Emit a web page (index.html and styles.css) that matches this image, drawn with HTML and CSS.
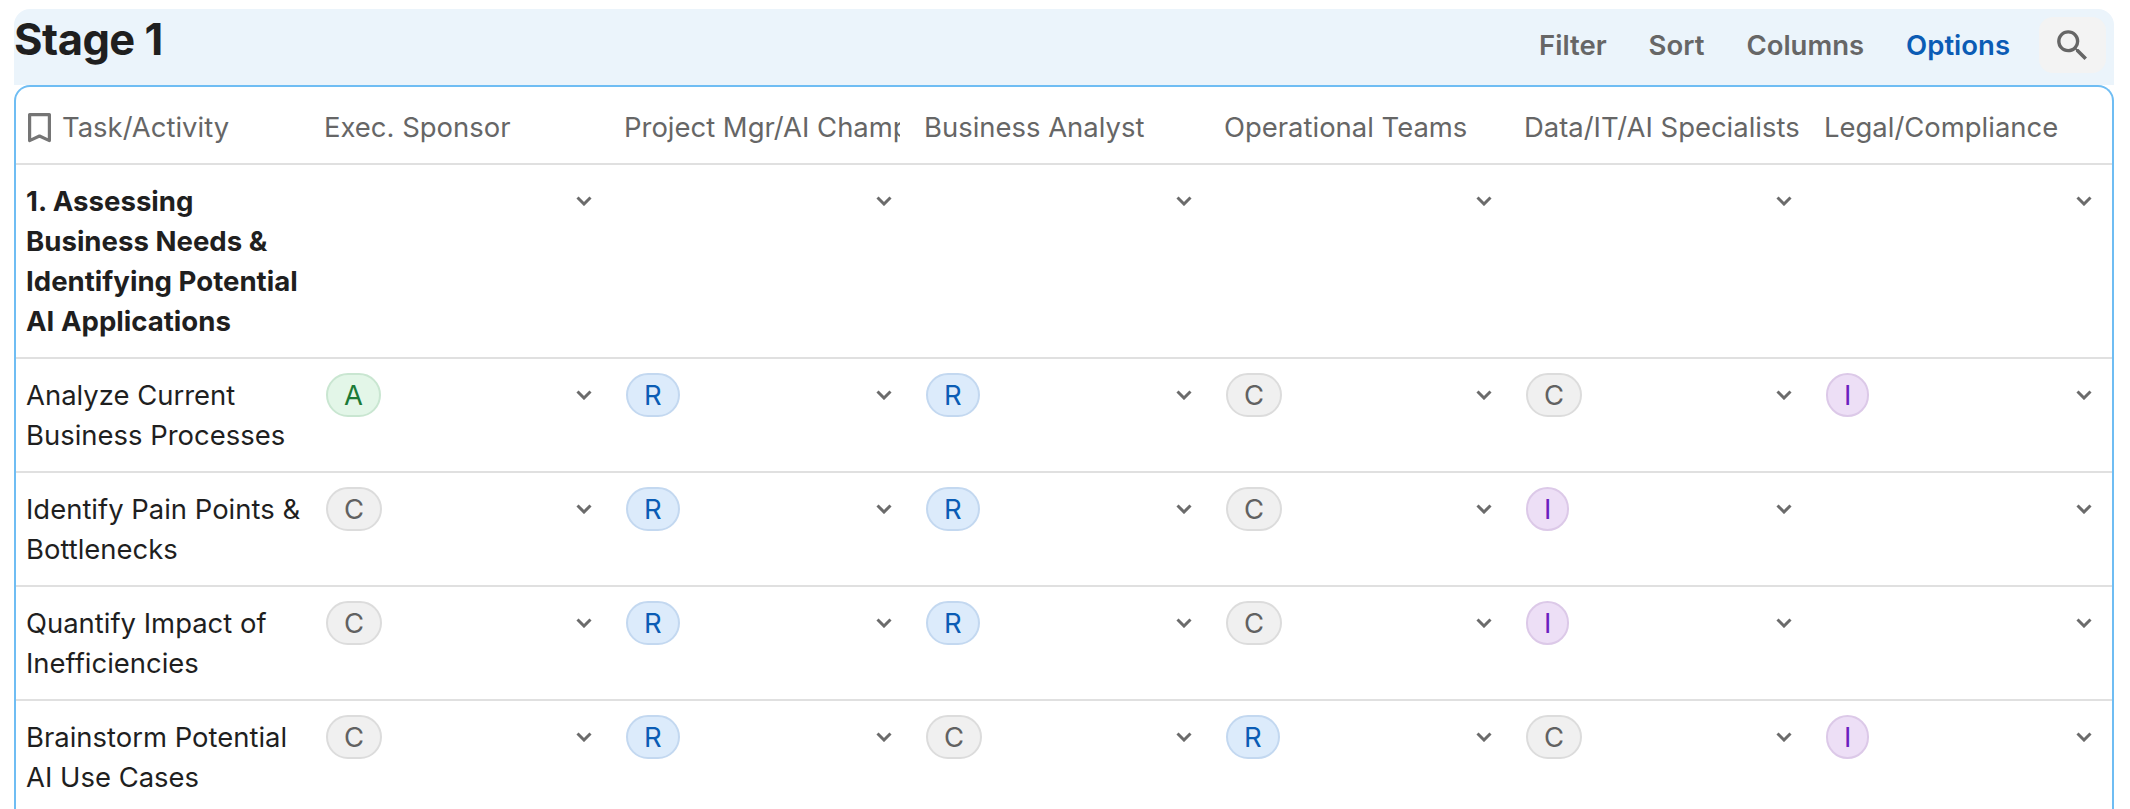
FILE: index.html
```html
<!DOCTYPE html>
<html lang="en">
<head>
<meta charset="utf-8">
<title>Stage 1</title>
<link rel="stylesheet" href="styles.css">
</head>
<body>
<main class="page">
  <header class="toolbar">
    <h1 class="title">Stage 1</h1>
    <nav class="actions">
      <button class="action act-filter">Filter</button>
      <button class="action act-sort">Sort</button>
      <button class="action act-columns">Columns</button>
      <button class="action active">Options</button>
      <button class="search" aria-label="Search">
        <svg viewBox="0 0 24 24" width="41" height="41" fill="#666"><path d="M15.5 14h-.79l-.28-.27A6.47 6.47 0 0 0 16 9.5 6.5 6.5 0 1 0 9.5 16c1.61 0 3.09-.59 4.23-1.57l.27.28v.79l5 4.99L20.49 19l-4.99-5zm-6 0C7.01 14 5 11.99 5 9.5S7.01 5 9.5 5 14 7.01 14 9.5 11.99 14 9.5 14z"/></svg>
      </button>
    </nav>
  </header>
  <section class="table">
    <div class="row head">
      <div class="cell task-head">
        <svg class="bookmark" viewBox="0 0 23 30" width="23" height="30"><path d="M1.6 1.6h19.8v26l-9.9-4.6-9.9 4.6z"/></svg>
        <span>Task/Activity</span>
      </div>
      <div class="cell">Exec. Sponsor</div>
      <div class="cell">Project Mgr/AI Champion</div>
      <div class="cell">Business Analyst</div>
      <div class="cell">Operational Teams</div>
      <div class="cell">Data/IT/AI Specialists</div>
      <div class="cell">Legal/Compliance</div>
    </div>
    <div class="row group">
      <div class="cell name"><strong>1. Assessing Business Needs &amp; Identifying Potential AI Applications</strong></div>
      <div class="cell pick"><svg class="chev" viewBox="0 0 16 10"><path d="M1.5 1.5 8 8l6.5-6.5"/></svg></div>
      <div class="cell pick"><svg class="chev" viewBox="0 0 16 10"><path d="M1.5 1.5 8 8l6.5-6.5"/></svg></div>
      <div class="cell pick"><svg class="chev" viewBox="0 0 16 10"><path d="M1.5 1.5 8 8l6.5-6.5"/></svg></div>
      <div class="cell pick"><svg class="chev" viewBox="0 0 16 10"><path d="M1.5 1.5 8 8l6.5-6.5"/></svg></div>
      <div class="cell pick"><svg class="chev" viewBox="0 0 16 10"><path d="M1.5 1.5 8 8l6.5-6.5"/></svg></div>
      <div class="cell pick"><svg class="chev" viewBox="0 0 16 10"><path d="M1.5 1.5 8 8l6.5-6.5"/></svg></div>
    </div>
    <div class="row">
      <div class="cell name">Analyze Current Business Processes</div>
      <div class="cell pick"><span class="tag a">A</span><svg class="chev" viewBox="0 0 16 10"><path d="M1.5 1.5 8 8l6.5-6.5"/></svg></div>
      <div class="cell pick"><span class="tag r">R</span><svg class="chev" viewBox="0 0 16 10"><path d="M1.5 1.5 8 8l6.5-6.5"/></svg></div>
      <div class="cell pick"><span class="tag r">R</span><svg class="chev" viewBox="0 0 16 10"><path d="M1.5 1.5 8 8l6.5-6.5"/></svg></div>
      <div class="cell pick"><span class="tag c">C</span><svg class="chev" viewBox="0 0 16 10"><path d="M1.5 1.5 8 8l6.5-6.5"/></svg></div>
      <div class="cell pick"><span class="tag c">C</span><svg class="chev" viewBox="0 0 16 10"><path d="M1.5 1.5 8 8l6.5-6.5"/></svg></div>
      <div class="cell pick"><span class="tag i">I</span><svg class="chev" viewBox="0 0 16 10"><path d="M1.5 1.5 8 8l6.5-6.5"/></svg></div>
    </div>
    <div class="row">
      <div class="cell name">Identify Pain Points &amp; Bottlenecks</div>
      <div class="cell pick"><span class="tag c">C</span><svg class="chev" viewBox="0 0 16 10"><path d="M1.5 1.5 8 8l6.5-6.5"/></svg></div>
      <div class="cell pick"><span class="tag r">R</span><svg class="chev" viewBox="0 0 16 10"><path d="M1.5 1.5 8 8l6.5-6.5"/></svg></div>
      <div class="cell pick"><span class="tag r">R</span><svg class="chev" viewBox="0 0 16 10"><path d="M1.5 1.5 8 8l6.5-6.5"/></svg></div>
      <div class="cell pick"><span class="tag c">C</span><svg class="chev" viewBox="0 0 16 10"><path d="M1.5 1.5 8 8l6.5-6.5"/></svg></div>
      <div class="cell pick"><span class="tag i">I</span><svg class="chev" viewBox="0 0 16 10"><path d="M1.5 1.5 8 8l6.5-6.5"/></svg></div>
      <div class="cell pick"><svg class="chev" viewBox="0 0 16 10"><path d="M1.5 1.5 8 8l6.5-6.5"/></svg></div>
    </div>
    <div class="row">
      <div class="cell name">Quantify Impact of Inefficiencies</div>
      <div class="cell pick"><span class="tag c">C</span><svg class="chev" viewBox="0 0 16 10"><path d="M1.5 1.5 8 8l6.5-6.5"/></svg></div>
      <div class="cell pick"><span class="tag r">R</span><svg class="chev" viewBox="0 0 16 10"><path d="M1.5 1.5 8 8l6.5-6.5"/></svg></div>
      <div class="cell pick"><span class="tag r">R</span><svg class="chev" viewBox="0 0 16 10"><path d="M1.5 1.5 8 8l6.5-6.5"/></svg></div>
      <div class="cell pick"><span class="tag c">C</span><svg class="chev" viewBox="0 0 16 10"><path d="M1.5 1.5 8 8l6.5-6.5"/></svg></div>
      <div class="cell pick"><span class="tag i">I</span><svg class="chev" viewBox="0 0 16 10"><path d="M1.5 1.5 8 8l6.5-6.5"/></svg></div>
      <div class="cell pick"><svg class="chev" viewBox="0 0 16 10"><path d="M1.5 1.5 8 8l6.5-6.5"/></svg></div>
    </div>
    <div class="row">
      <div class="cell name">Brainstorm Potential AI Use Cases</div>
      <div class="cell pick"><span class="tag c">C</span><svg class="chev" viewBox="0 0 16 10"><path d="M1.5 1.5 8 8l6.5-6.5"/></svg></div>
      <div class="cell pick"><span class="tag r">R</span><svg class="chev" viewBox="0 0 16 10"><path d="M1.5 1.5 8 8l6.5-6.5"/></svg></div>
      <div class="cell pick"><span class="tag c">C</span><svg class="chev" viewBox="0 0 16 10"><path d="M1.5 1.5 8 8l6.5-6.5"/></svg></div>
      <div class="cell pick"><span class="tag r">R</span><svg class="chev" viewBox="0 0 16 10"><path d="M1.5 1.5 8 8l6.5-6.5"/></svg></div>
      <div class="cell pick"><span class="tag c">C</span><svg class="chev" viewBox="0 0 16 10"><path d="M1.5 1.5 8 8l6.5-6.5"/></svg></div>
      <div class="cell pick"><span class="tag i">I</span><svg class="chev" viewBox="0 0 16 10"><path d="M1.5 1.5 8 8l6.5-6.5"/></svg></div>
    </div>
  </section>
</main>
</body>
</html>
```

FILE: styles.css
```css
* { box-sizing: border-box; }
html, body { margin: 0; height: 100%; overflow: hidden; background: #fff; }
body { font-family: Inter, "Liberation Sans", sans-serif; font-size: 27.45px; line-height: 40px; color: #1f1f1f; }
.page { padding: 9px 16px 0 14px; height: 809px; overflow: hidden; }

.toolbar {
  display: flex; justify-content: space-between; align-items: flex-start;
  height: 76px; background: #ebf4fb; border-radius: 16px 16px 0 0; padding: 5px 8px 0 0;
}
.title { margin: 0; font-size: 43.5px; line-height: 50px; font-weight: 700; letter-spacing: -0.5px; color: #1f1f1f; }
.actions { display: flex; align-items: center; height: 56px; margin-top: 3px; }
.action {
  border: 0; background: none; padding: 0; font: 600 27.5px/40px Inter, sans-serif; color: #666;
  margin-right: 42px;
}
.action.active { color: #0b5cb5; margin-right: 29px; }
.search {
  display: flex; align-items: center; justify-content: center;
  width: 67px; height: 56px; border: 0; padding: 0; border-radius: 14px; background: #f3f3f3;
}

.table {
  border: 2px solid #6fbdf3; border-bottom: 0; border-radius: 16px 16px 0 0; background: #fff;
}
.row {
  display: grid; grid-template-columns: 296px repeat(6, 300px);
  border-top: 2px solid #e0e0e0; height: 114px;
}
.row.head { border-top: 0; height: 76px; color: #666; }
.row.group { height: 194px; }
.cell { padding: 16px 12px 0; min-width: 0; }
.head .cell { padding-top: 20px; white-space: nowrap; overflow: hidden; clip-path: inset(0 12px 0 0); }
.task-head { display: flex; align-items: flex-start; gap: 11px; padding-left: 12px !important; }
.bookmark { flex: none; margin-top: 6px; fill: none; stroke: #757575; stroke-width: 3.2; stroke-linejoin: round; }
.name { padding: 16px 4px 0 10px; }
.name strong { font-weight: 700; font-size: 27.6px; }
.pick { display: flex; justify-content: space-between; align-items: flex-start; padding-right: 20px; }
.chev { width: 16px; height: 10px; fill: none; stroke: #6b6b6b; stroke-width: 3; margin-left: auto; margin-top: 15px; }
.tag {
  display: block; height: 44px; line-height: 40px; padding: 0 16px; border: 2px solid; border-radius: 22px;
  margin-left: 2px; margin-top: -2px;
}
.tag.a { background: #e3f6e8; border-color: #c9e6d1; color: #1b7a37; }
.tag.r { background: #dcebfb; border-color: #c3d8f0; color: #0b5cb5; }
.tag.c { background: #f0f0f0; border-color: #dcdcdc; color: #616161; }
.tag.i { background: #eddff6; border-color: #dcc9e8; color: #6a1fbf; }
```
